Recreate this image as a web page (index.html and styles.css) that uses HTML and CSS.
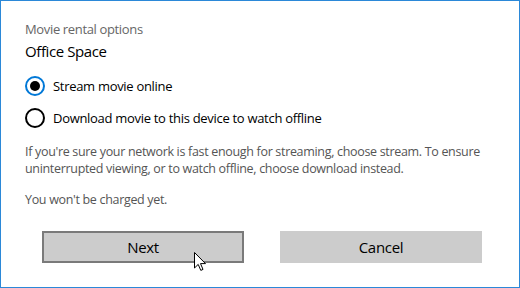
FILE: index.html
```html
<!DOCTYPE html>
<html lang="en">
<head>
  <meta charset="UTF-8" />
  <title>Movie rental options</title>
  <link rel="stylesheet" href="styles.css">
</head>
<body>
  <div class="dialog">
    <p class="caption">Movie rental options</p>
    <h2 class="title">Office Space</h2>

    <div class="options">
      <input type="radio" name="mode" id="stream" checked><label for="stream"><span class="dot"></span>Stream movie online</label>
      <input type="radio" name="mode" id="download"><label for="download"><span class="dot"></span>Download movie to this device to watch offline</label>
    </div>

    <p class="info">If you're sure your network is fast enough for streaming, choose stream. To ensure uninterrupted viewing, or to watch offline, choose download instead.</p>
    <p class="info note">You won't be charged yet.</p>

    <div class="buttons">
      <button class="btn hover">Next</button>
      <button class="btn">Cancel</button>
    </div>

    <svg class="cursor" width="14" height="20" viewBox="0 0 14 20">
      <path d="M0.5 0.5 L0.5 16 L4.2 12.4 L6.8 18.4 L9 17.4 L6.5 11.6 L11.5 11.6 Z" fill="#fff" stroke="#000" stroke-width="1"/>
    </svg>
  </div>
</body>
</html>
```

FILE: styles.css
```css
* {
  box-sizing: border-box;
}

body {
  margin: 0;
  padding: 0;
  background-color: #fff;
  font-family: 'Open Sans', sans-serif;
}

.dialog {
  position: relative;
  width: 520px;
  height: 288px;
  border: 1px solid #2b88d8;
  padding: 19px 8px 0 24px;
}

.caption {
  margin: 0;
  font-size: 13px;
  line-height: 18px;
  letter-spacing: -0.35px;
  color: #666;
}

.title {
  margin: 3px 0 0 0;
  font-size: 15px;
  font-weight: normal;
  line-height: 20px;
  letter-spacing: -0.4px;
  color: #000;
}

.options {
  margin-top: 15px;
  display: flex;
  flex-direction: column;
  gap: 12px;
}

.options input[type="radio"] {
  display: none;
}

.options label {
  display: flex;
  align-items: center;
  gap: 8px;
  font-size: 13px;
  line-height: 20px;
  letter-spacing: -0.3px;
  color: #000;
}

.dot {
  width: 20px;
  height: 20px;
  border: 2px solid #000;
  border-radius: 50%;
  display: flex;
  align-items: center;
  justify-content: center;
}

.options input[type="radio"]:checked + label .dot {
  border-color: #0078d7;
}

.options input[type="radio"]:checked + label .dot::after {
  content: "";
  width: 10px;
  height: 10px;
  border-radius: 50%;
  background: #000;
}

.info {
  margin: 15px 0 0 0;
  font-size: 12.5px;
  line-height: 17px;
  letter-spacing: -0.32px;
  color: #555;
}

.note {
  margin-top: 14px;
}

.buttons {
  margin-top: 23px;
  padding-left: 17px;
  display: flex;
  gap: 36px;
}

.btn {
  width: 202px;
  height: 32px;
  background: #ccc;
  border: 2px solid #ccc;
  font-family: 'Open Sans', sans-serif;
  font-size: 15px;
  letter-spacing: -0.3px;
  color: #000;
  padding: 0;
}

.btn.hover {
  border-color: #7a7a7a;
}

.cursor {
  position: absolute;
  left: 193px;
  top: 251px;
}
```
